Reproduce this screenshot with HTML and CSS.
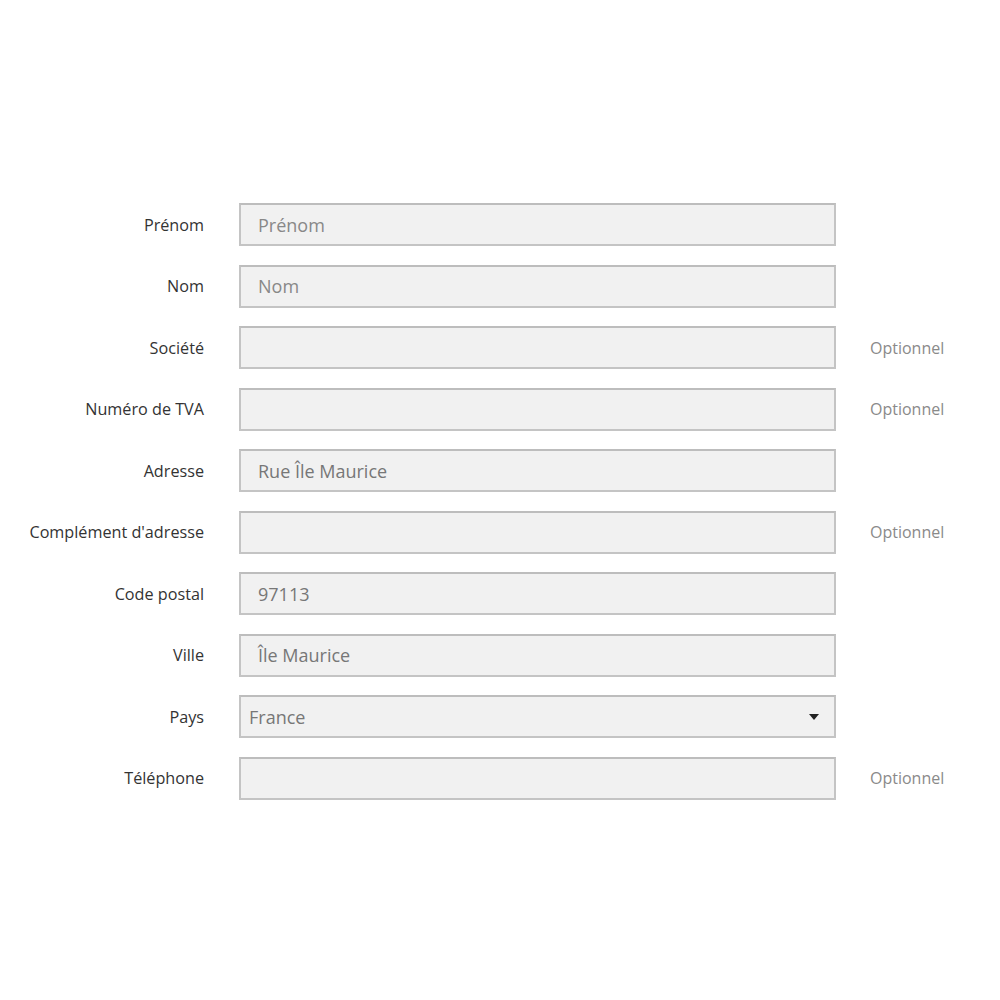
FILE: index.html
```html
<!doctype html>
<html lang="fr">
 <head>
  <meta charset="UTF-8">
  <title>Adresse</title>
  <link rel="stylesheet" href="styles.css">
 </head>
 <body>
  <form class="address-form">
   <label class="field-label">Prénom</label>
   <div class="field-input placeholder">Prénom</div>
   <span class="field-note"></span>

   <label class="field-label">Nom</label>
   <div class="field-input placeholder">Nom</div>
   <span class="field-note"></span>

   <label class="field-label">Société</label>
   <div class="field-input"></div>
   <span class="field-note">Optionnel</span>

   <label class="field-label">Numéro de TVA</label>
   <div class="field-input"></div>
   <span class="field-note">Optionnel</span>

   <label class="field-label">Adresse</label>
   <div class="field-input">Rue Île Maurice</div>
   <span class="field-note"></span>

   <label class="field-label">Complément d'adresse</label>
   <div class="field-input"></div>
   <span class="field-note">Optionnel</span>

   <label class="field-label">Code postal</label>
   <div class="field-input">97113</div>
   <span class="field-note"></span>

   <label class="field-label">Ville</label>
   <div class="field-input">Île Maurice</div>
   <span class="field-note"></span>

   <label class="field-label">Pays</label>
   <div class="field-input select">
    <span>France</span>
    <svg class="caret" width="10" height="6" viewBox="0 0 10 6"><path d="M0 0h10L5 6z" fill="#222"/></svg>
   </div>
   <span class="field-note"></span>

   <label class="field-label">Téléphone</label>
   <div class="field-input"></div>
   <span class="field-note">Optionnel</span>
  </form>
 </body>
</html>
```
FILE: styles.css
```css
* {
  margin: 0;
  padding: 0;
  box-sizing: border-box;
}

body {
  background: #fff;
  font-family: 'Open Sans', 'Noto Sans', sans-serif;
  width: 1000px;
  height: 1000px;
}

.address-form {
  display: grid;
  grid-template-columns: 204px 597px auto;
  grid-auto-rows: 43px;
  column-gap: 35px;
  row-gap: 18.5px;
  padding-top: 203px;
  align-items: center;
}

.field-label {
  text-align: right;
  font-size: 16.2px;
  color: #333;
}

.field-input {
  height: 43px;
  background: #f1f1f1;
  border: 2px solid #c4c4c4;
  border-top-color: #bdbdbd;
  display: flex;
  align-items: center;
  padding: 0 17px;
  font-size: 18px;
  color: #777;
}

.field-input.placeholder {
  color: #888;
}

.field-input.select {
  justify-content: space-between;
  padding: 0 15px 0 8px;
}

.field-note {
  margin-left: -1px;
  font-size: 16px;
  color: #8a8a8a;
}
```
